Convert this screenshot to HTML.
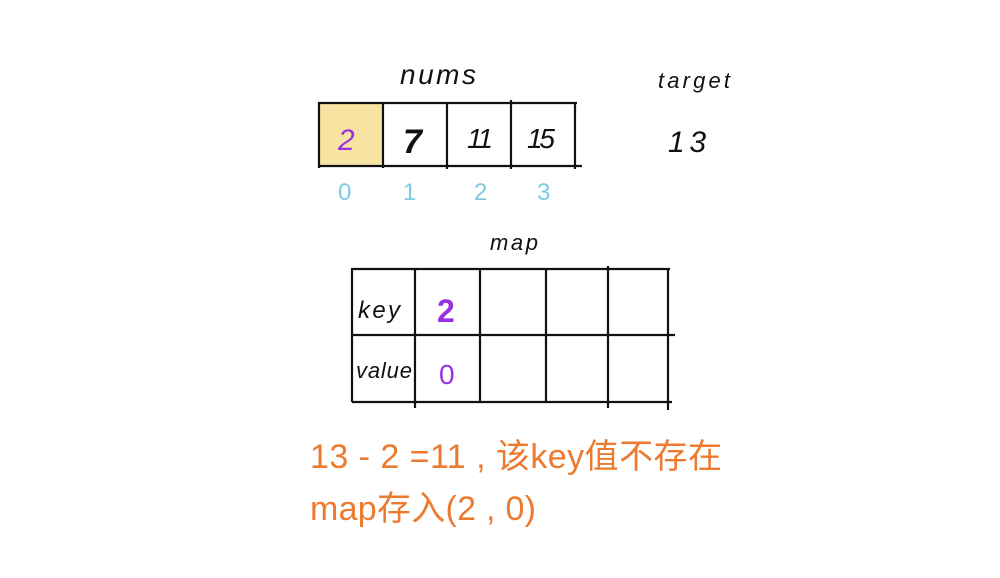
<!DOCTYPE html>
<html><head><meta charset="utf-8"><style>
html,body{margin:0;padding:0;background:#fff;width:1000px;height:578px;overflow:hidden}
svg{display:block}
text{font-family:"Liberation Sans","Noto Sans CJK SC",sans-serif}
</style></head><body>
<svg width="1000" height="578" viewBox="0 0 1000 578">
<rect x="320" y="103" width="63" height="63" fill="#f8e4a2"/>
<g stroke="#111" stroke-width="2.2" fill="none">
<line x1="318" y1="103" x2="577" y2="103"/>
<line x1="318" y1="166" x2="582" y2="166"/>
<line x1="319" y1="102" x2="319" y2="168"/>
<line x1="383" y1="102" x2="383" y2="168"/>
<line x1="447" y1="102" x2="447" y2="169"/>
<line x1="511" y1="100" x2="511" y2="169"/>
<line x1="575" y1="102" x2="575" y2="169"/>
<line x1="352" y1="269" x2="670" y2="269"/>
<line x1="352" y1="335" x2="675" y2="335"/>
<line x1="352" y1="402" x2="672" y2="402"/>
<line x1="352" y1="268" x2="352" y2="402"/>
<line x1="415" y1="268" x2="415" y2="408"/>
<line x1="480" y1="268" x2="480" y2="402"/>
<line x1="546" y1="268" x2="546" y2="402"/>
<line x1="608" y1="266" x2="608" y2="408"/>
<line x1="668" y1="268" x2="668" y2="410"/>
</g>
<g font-style="italic" fill="#111">
<text x="400" y="84" font-size="28" textLength="76">nums</text>
<text x="658" y="88" font-size="22" textLength="72">target</text>
<text x="668" y="152" font-size="30" textLength="38">13</text>
<text x="403" y="153" font-size="34" font-weight="bold">7</text>
<text x="467" y="148" font-size="28" textLength="26">11</text>
<text x="527" y="148" font-size="28" textLength="28">15</text>
<text x="490" y="250" font-size="22" textLength="48">map</text>
<text x="358" y="318" font-size="24" textLength="42">key</text>
<text x="356" y="378" font-size="22" textLength="56">value</text>
</g>
<text x="338" y="150" font-size="30" font-style="italic" fill="#9b30e0">2</text>
<text x="437" y="322" font-size="32" font-weight="bold" fill="#9b30e0">2</text>
<text x="439" y="384" font-size="28" fill="#9b30e0">0</text>
<g fill="#7ecbe0" font-size="24">
<text x="338" y="200">0</text><text x="403" y="200">1</text><text x="474" y="200">2</text><text x="537" y="200">3</text>
</g>
<g fill="#ec7a30" font-size="34">
<text x="310" y="468" textLength="412">13 - 2 =11 , 该key值不存在</text>
<text x="310" y="520" textLength="226">map存入(2 , 0)</text>
</g>
</svg>
</body></html>
